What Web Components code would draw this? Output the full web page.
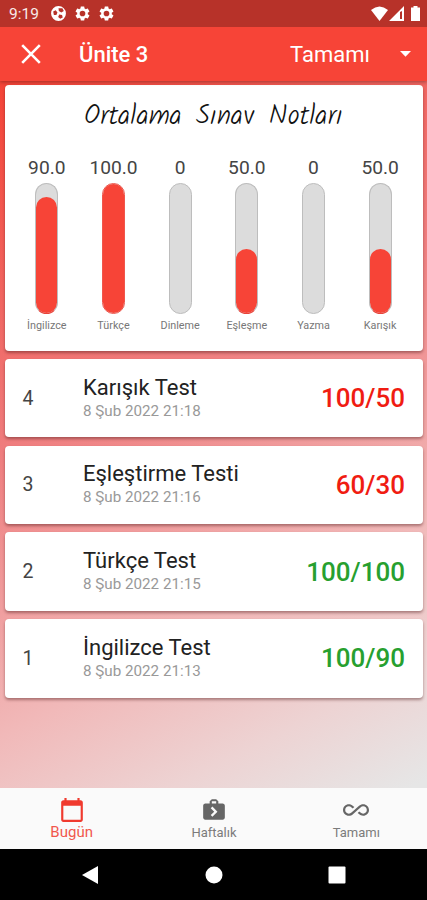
<!DOCTYPE html>
<html lang="tr">
<head>
<meta charset="utf-8">
<meta name="viewport" content="width=device-width, initial-scale=1">
<title>Ünite 3</title>
<style>
    body {
        margin: 0;
        font-family: Roboto, "Liberation Sans", sans-serif;
    }
</style>
</head>
<body>
<unit-screen>
    <status-bar slot="top" time="9:19"></status-bar>
    <app-bar slot="top" filter="Tamamı">Ünite 3</app-bar>

    <score-chart>
        <span slot="title">Ortalama Sınav Notları</span>
        <score-bar value="90" label="90.0">İngilizce</score-bar>
        <score-bar value="100" label="100.0">Türkçe</score-bar>
        <score-bar value="0" label="0">Dinleme</score-bar>
        <score-bar value="50" label="50.0">Eşleşme</score-bar>
        <score-bar value="0" label="0">Yazma</score-bar>
        <score-bar value="50" label="50.0">Karışık</score-bar>
    </score-chart>
    <test-row number="4" date="8 Şub 2022 21:18" score="100/50">Karışık Test</test-row>
    <test-row number="3" date="8 Şub 2022 21:16" score="60/30">Eşleştirme Testi</test-row>
    <test-row number="2" date="8 Şub 2022 21:15" score="100/100" passed>Türkçe Test</test-row>
    <test-row number="1" date="8 Şub 2022 21:13" score="100/90" passed>İngilizce Test</test-row>

    <tab-bar slot="bottom">
        <tab-item icon="calendar" active>Bugün</tab-item>
        <tab-item icon="bag">Haftalık</tab-item>
        <tab-item icon="infinity">Tamamı</tab-item>
    </tab-bar>
    <system-keys slot="bottom"></system-keys>
</unit-screen>

<script>
const icons = {
    calendar: '<path d="M20 3h-1V1h-2v2H7V1H5v2H4c-1.1 0-2 .9-2 2v16c0 1.100.9 2 2 2h16c1.100 0 2-.9 2-2V5c0-1.100-.9-2-2-2zm0 18H4V8h16v13z"/>',
    bag: '<path fill-rule="evenodd" d="M10 2h4l2 2v2h4c1.100 0 2 .9 2 2v11c0 1.100-.9 2-2 2H4c-1.100 0-2-.9-2-2V8c0-1.100.9-2 2-2h4V4zm0 2v2h4V4zM10.500 8.800L9 10.300l3.200 3.200L9 16.700l1.500 1.500 4.700-4.700z"/>',
    infinity: '<path d="M18.600 6.620c-1.440 0-2.800.56-3.770 1.530L12 10.660 10.480 12h.01L7.800 14.390c-.64.640-1.490.99-2.400.99-1.870 0-3.390-1.510-3.390-3.380S3.530 8.620 5.400 8.620c.91 0 1.760.35 2.440 1.030l1.130 1 1.510-1.340L9.220 8.200C8.200 7.180 6.840 6.620 5.400 6.620 2.420 6.620 0 9.040 0 12s2.420 5.380 5.400 5.380c1.440 0 2.800-.56 3.770-1.530l2.830-2.500.01.01L13.520 12h-.01l2.690-2.390c.64-.64 1.490-.99 2.400-.99 1.870 0 3.390 1.510 3.390 3.380s-1.520 3.380-3.390 3.380c-.9 0-1.760-.35-2.440-1.030l-1.140-1.010-1.510 1.340 1.270 1.120c1.020 1.010 2.370 1.570 3.820 1.570 2.980 0 5.400-2.410 5.400-5.380s-2.420-5.370-5.400-5.370z"/>',
    gear: '<path d="M19.430 12.980c.04-.32.070-.64.070-.98s-.03-.66-.07-.98l2.110-1.650c.19-.15.240-.42.120-.64l-2-3.460c-.12-.22-.39-.3-.61-.22l-2.490 1c-.52-.4-1.080-.73-1.690-.98l-.38-2.650C14.460 2.180 14.250 2 14 2h-4c-.25 0-.46.180-.49.420l-.38 2.650c-.61.250-1.170.59-1.690.98l-2.490-1c-.23-.09-.49 0-.61.220l-2 3.460c-.13.220-.07.49.120.64l2.110 1.650c-.04.320-.07.650-.07.980s.03.660.070.980l-2.110 1.650c-.19.150-.24.420-.12.640l2 3.460c.12.220.39.300.61.220l2.490-1c.52.400 1.080.73 1.690.98l.38 2.650c.03.240.24.420.49.420h4c.25 0 .46-.18.490-.42l.38-2.650c.61-.25 1.170-.59 1.690-.98l2.490 1c.23.090.49 0 .61-.22l2-3.460c.12-.22.070-.49-.12-.64zM12 16a4 4 0 1 1 0-8 4 4 0 0 1 0 8z"/>',
    ball: '<path fill-rule="evenodd" d="M12 1.500a10.500 10.500 0 1 0 0 21 10.500 10.500 0 0 0 0-21zM12 4.500l5.500 0 2 4-3.500 2-3.500-2zM4.500 9l3.500-1.500 2.500 3-1.500 3.500-3.500 0zM13 13.500l4 .5 1 3.500-3.500 2-3-2.500z"/>'
};

class UnitScreen extends HTMLElement {
    constructor() {
        super();
        this.attachShadow({ mode: 'open' });
        this.shadowRoot.innerHTML = `
            <style>
                :host {
                    display: flex;
                    flex-direction: column;
                    height: 900px;
                    overflow: hidden;
                    background: #000;
                }
                header {
                    position: relative;
                    box-shadow: 0 1px 4px rgba(0, 0, 0, .35);
                }
                main {
                    flex: 1;
                    display: flex;
                    flex-direction: column;
                    gap: 8.400px;
                    padding: 4px 4px 0 5px;
                    background: linear-gradient(153deg, #f44336 0%, #ef7d7e 40%, #f1b9b9 71%, #edd3d3 86%, #e6e6e6 99%);
                }
            </style>
            <header><slot name="top"></slot></header>
            <main><slot></slot></main>
            <slot name="bottom"></slot>
        `;
    }
}

class StatusBar extends HTMLElement {
    constructor() {
        super();
        this.attachShadow({ mode: 'open' });
        this.shadowRoot.innerHTML = `
            <style>
                :host {
                    display: flex;
                    align-items: center;
                    height: 27px;
                    padding: 0 7px 0 9px;
                    box-sizing: border-box;
                    background: #b73229;
                    color: #fff;
                    font-size: 15.500px;
                }
                svg { fill: currentColor; display: block; }
                .time { width: 41px; opacity: .9; }
                .left { display: flex; gap: 7px; flex: 1; }
                .right { display: flex; align-items: center; gap: 1px; }
                .battery { margin-left: 6px; }
            </style>
            <span class="time">${this.getAttribute('time')}</span>
            <div class="left">
                <svg width="17" height="17" viewBox="0 0 24 24">${icons.ball}</svg>
                <svg width="17" height="17" viewBox="0 0 24 24">${icons.gear}</svg>
                <svg width="17" height="17" viewBox="0 0 24 24">${icons.gear}</svg>
            </div>
            <div class="right">
                <svg width="17" height="15" viewBox="0 0 17 15"><path d="M0 4Q8.500-3 17 4L8.500 15z"/></svg>
                <svg width="15" height="15" viewBox="0 0 15 15"><path fill-rule="evenodd" d="M15 0v15H0zM11 6v7h2V5z"/></svg>
                <svg class="battery" width="9" height="15" viewBox="0 0 9 15"><path d="M2.500 0h4v1.500H9V15H0V1.500h2.500z"/></svg>
            </div>
        `;
    }
}

class AppBar extends HTMLElement {
    constructor() {
        super();
        this.attachShadow({ mode: 'open' });
        this.shadowRoot.innerHTML = `
            <style>
                :host {
                    display: flex;
                    align-items: center;
                    height: 54px;
                    padding: 0 16px 0 21px;
                    box-sizing: border-box;
                    background: #f74437;
                    color: #fff;
                }
                .title {
                    flex: 1;
                    margin-left: 38px;
                    font-size: 22px;
                    font-weight: 500;
                }
                .filter { font-size: 22px; margin-right: 30px; }
            </style>
            <svg width="20" height="20" viewBox="0 0 20 20" stroke="#fff" stroke-width="2.600"><path d="M1.200 1.200l17.600 17.600M18.800 1.200L1.200 18.800"/></svg>
            <span class="title"><slot></slot></span>
            <span class="filter">${this.getAttribute('filter')}</span>
            <svg width="11" height="6" viewBox="0 0 11 6" fill="#fff"><path d="M0 0h11L5.500 5.800z"/></svg>
        `;
    }
}

class ScoreChart extends HTMLElement {
    constructor() {
        super();
        this.attachShadow({ mode: 'open' });
        this.shadowRoot.innerHTML = `
            <style>
                :host {
                    display: block;
                    height: 265.500px;
                    box-sizing: border-box;
                    padding: 12px 9.500px 0 8.500px;
                    border-radius: 4px;
                    background: #fff;
                    box-shadow: 0 2px 3px rgba(70, 20, 20, .42);
                }
                .title {
                    text-align: center;
                    white-space: nowrap;
                    font: 300 27px/40px Kalam, "Open Sans", sans-serif;
                    word-spacing: 3px;
                    color: #111;
                }
                .bars {
                    display: grid;
                    grid-template-columns: repeat(6, 1fr);
                    margin-top: 19px;
                }
            </style>
            <div class="title"><slot name="title"></slot></div>
            <div class="bars"><slot></slot></div>
        `;
    }
}

class ScoreBar extends HTMLElement {
    constructor() {
        super();
        this.attachShadow({ mode: 'open' });
        this.shadowRoot.innerHTML = `
            <style>
                :host {
                    display: flex;
                    flex-direction: column;
                    align-items: center;
                }
                .value { font-size: 19.200px; line-height: 23px; color: #444; }
                .track {
                    display: flex;
                    align-items: flex-end;
                    width: 23px;
                    height: 131px;
                    margin: 4px 0 5px;
                    box-sizing: border-box;
                    border: 1px solid #bdbdbd;
                    border-radius: 12px;
                    background: #dcdcdc;
                }
                .fill {
                    width: 21px;
                    border-radius: 11px;
                    background: #f74437;
                }
                .track.on { border-bottom-color: #e8453b; }
                .track.full { border-color: #f0564c; }
                .name { font-size: 10.800px; line-height: 13px; color: #777; }
            </style>
            <span class="value">${this.getAttribute('label')}</span>
            <div class="track"><div class="fill"></div></div>
            <span class="name"><slot></slot></span>
        `;
    }

    connectedCallback() {
        let value = Number(this.getAttribute('value'));
        let track = this.shadowRoot.querySelector('.track');

        this.shadowRoot.querySelector('.fill').style.height = `${value}%`;
        track.classList.toggle('on', value > 0);
        track.classList.toggle('full', value === 100);
    }
}

class TestRow extends HTMLElement {
    constructor() {
        super();
        this.attachShadow({ mode: 'open' });
        this.shadowRoot.innerHTML = `
            <style>
                :host {
                    display: flex;
                    align-items: center;
                    height: 78.400px;
                    box-sizing: border-box;
                    padding: 0 18px 0 17.500px;
                    border-radius: 4px;
                    background: #fff;
                    box-shadow: 0 2px 3px rgba(70, 20, 20, .42);
                }
                .number { width: 60.500px; font-size: 19.500px; color: #444; }
                .text { flex: 1; margin-top: -1px; }
                .name { font-size: 22px; line-height: 26px; color: #222; }
                .date { font-size: 15.200px; line-height: 20px; color: #999; }
                .score { font-size: 26px; font-weight: 500; color: #f01c12; }
                :host([passed]) .score { color: #27a02f; }
            </style>
            <span class="number">${this.getAttribute('number')}</span>
            <div class="text">
                <div class="name"><slot></slot></div>
                <div class="date">${this.getAttribute('date')}</div>
            </div>
            <span class="score">${this.getAttribute('score')}</span>
        `;
    }
}

class TabBar extends HTMLElement {
    constructor() {
        super();
        this.attachShadow({ mode: 'open' });
        this.shadowRoot.innerHTML = `
            <style>
                :host {
                    display: grid;
                    grid-template-columns: repeat(3, 1fr);
                    height: 61px;
                    background: #fafafa;
                }
            </style>
            <slot></slot>
        `;
    }
}

class TabItem extends HTMLElement {
    constructor() {
        super();
        this.attachShadow({ mode: 'open' });
        this.shadowRoot.innerHTML = `
            <style>
                :host {
                    display: flex;
                    flex-direction: column;
                    align-items: center;
                    padding: 9px 0 0 1px;
                    color: #666;
                    font-size: 13px;
                }
                :host([active]) { color: #f03a2e; font-size: 15px; }
                svg { fill: currentColor; }
                span { line-height: 19px; opacity: .85; }
            </style>
            <svg width="26" height="26" viewBox="0 0 24 24">${icons[this.getAttribute('icon')]}</svg>
            <span><slot></slot></span>
        `;
    }
}

class SystemKeys extends HTMLElement {
    constructor() {
        super();
        this.attachShadow({ mode: 'open' });
        this.shadowRoot.innerHTML = `
            <style>
                :host {
                    display: flex;
                    align-items: center;
                    justify-content: space-between;
                    height: 51px;
                    padding: 0 81px;
                    box-sizing: border-box;
                    background: #000;
                }
                svg { fill: #fff; }
            </style>
            <svg width="18" height="20" viewBox="0 0 18 20"><path d="M17 1v18L1 10z"/></svg>
            <svg width="18" height="18" viewBox="0 0 18 18"><circle cx="9" cy="9" r="8.500"/></svg>
            <svg width="18" height="18" viewBox="0 0 18 18"><rect x=".5" y=".5" width="17" height="17" rx="1"/></svg>
        `;
    }
}

customElements.define('unit-screen', UnitScreen);
customElements.define('status-bar', StatusBar);
customElements.define('app-bar', AppBar);
customElements.define('score-chart', ScoreChart);
customElements.define('score-bar', ScoreBar);
customElements.define('test-row', TestRow);
customElements.define('tab-bar', TabBar);
customElements.define('tab-item', TabItem);
customElements.define('system-keys', SystemKeys);
</script>
</body>
</html>
